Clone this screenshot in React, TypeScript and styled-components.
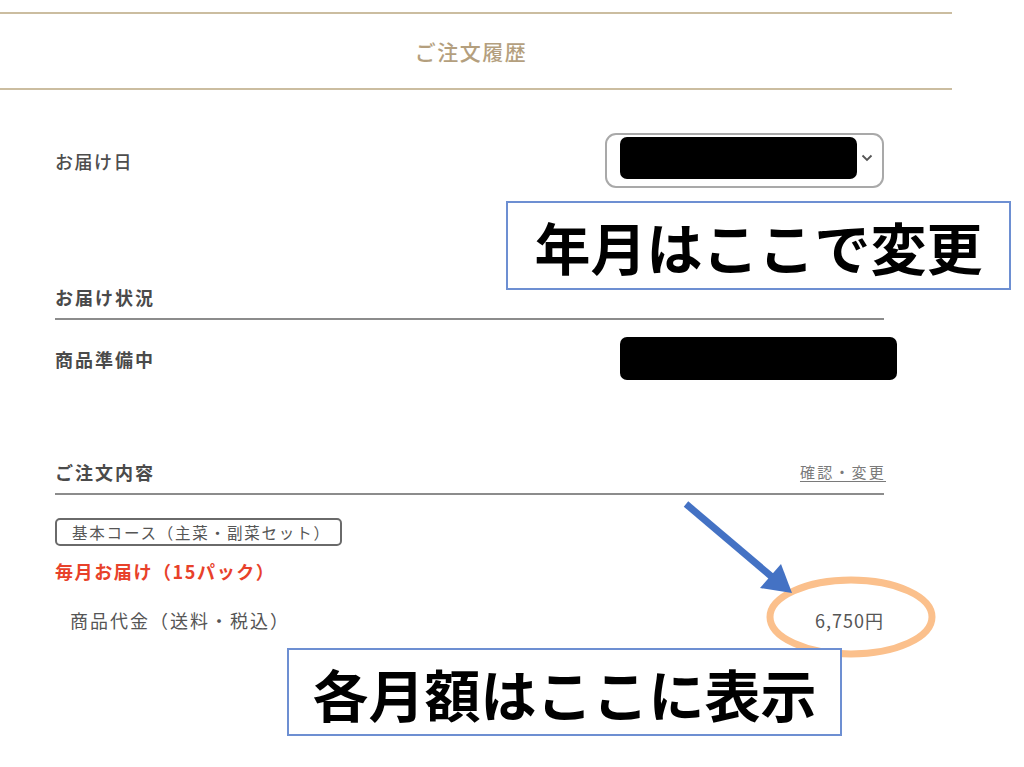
import styled, { createGlobalStyle } from "styled-components"

const GlobalStyle = createGlobalStyle`
    html, body {
        margin: 0;
        padding: 0;
        background: #ffffff;
    }
    body {
        font-family: "Noto Sans CJK JP", "Noto Sans", sans-serif;
        color: #4a4a4a;
    }
`

export default function App() {
    return (
        <>
            <GlobalStyle />
            <Page>
                <Header>
                    <Title>ご注文履歴</Title>
                </Header>

                <Content>
                    <DateRow>
                        <Label>お届け日</Label>
                        <Select>
                            <Redacted $w={237} $h={42} />
                            <Chevron viewBox="0 0 12 8">
                                <path d="M1.5 1.5 L6 6 L10.5 1.5" fill="none" stroke="#555" strokeWidth="1.8" />
                            </Chevron>
                        </Select>
                    </DateRow>

                    <SectionHead $top={96}>
                        <HeadText>お届け状況</HeadText>
                    </SectionHead>
                    <StatusRow>
                        <HeadText>商品準備中</HeadText>
                        <Redacted $w={277} $h={43} $overhang />
                    </StatusRow>

                    <SectionHead $top={79}>
                        <HeadText>ご注文内容</HeadText>
                        <EditLink>確認・変更</EditLink>
                    </SectionHead>

                    <CourseBadge>基本コース（主菜・副菜セット）</CourseBadge>
                    <Delivery>毎月お届け（15パック）</Delivery>
                    <PriceRow>
                        <span>商品代金（送料・税込）</span>
                        <Price>6,750円</Price>
                    </PriceRow>
                </Content>

                {/* annotations drawn over the screenshot */}
                <Marks viewBox="0 0 1024 767">
                    <ellipse cx="851" cy="617" rx="81" ry="37" fill="none" stroke="#fbc08c" strokeWidth="7" />
                    <line x1="686" y1="504" x2="772" y2="577" stroke="#4472c4" strokeWidth="7" />
                    <polygon points="792,593 760,588 781,564" fill="#4472c4" />
                </Marks>
                <Callout $left={506} $top={201} $w={505} $h={89}>年月はここで変更</Callout>
                <Callout $left={287} $top={648} $w={555} $h={88}>各月額はここに表示</Callout>
            </Page>
        </>
    )
}

const Page = styled.div`
    position: relative;
    width: 1024px;
    height: 767px;
    overflow: hidden;
    padding-top: 12px;
    box-sizing: border-box;
`

const Header = styled.header`
    width: 952px;
    height: 74px;
    border-top: 2px solid #cbbda0;
    border-bottom: 2px solid #cbbda0;
    display: flex;
    align-items: center;
    justify-content: center;
`

const Title = styled.h1`
    margin: 0 0 0 -10px;
    font-size: 21px;
    font-weight: 500;
    letter-spacing: 1.5px;
    color: #b49f7e;
`

const Content = styled.main`
    width: 829px;
    margin-left: 55px;
    display: flex;
    flex-direction: column;
`

const DateRow = styled.div`
    margin-top: 43px;
    display: flex;
    align-items: center;
    justify-content: space-between;
`

const Label = styled.span`
    font-size: 18px;
    font-weight: 500;
    letter-spacing: 1.5px;
    color: #4d4d4d;
`

const Select = styled.div`
    width: 279px;
    height: 55px;
    box-sizing: border-box;
    border: 2px solid #a9a9a9;
    border-radius: 11px;
    display: flex;
    align-items: center;
    padding: 0 0 6px 13px;
    gap: 4px;
`

const Redacted = styled.div<{ $w: number; $h: number; $overhang?: boolean }>`
    width: ${(p) => p.$w}px;
    height: ${(p) => p.$h}px;
    background: #000;
    border-radius: 7px;
    margin-right: ${(p) => (p.$overhang ? "-13px" : "0")};
`

const Chevron = styled.svg`
    width: 12px;
    height: 8px;
`

const SectionHead = styled.div<{ $top: number }>`
    margin-top: ${(p) => p.$top}px;
    padding-bottom: 8px;
    border-bottom: 2px solid #8c8c8c;
    display: flex;
    align-items: center;
    justify-content: space-between;
    line-height: 26px;
`

const HeadText = styled.span`
    font-size: 18px;
    font-weight: 700;
    letter-spacing: 2px;
    color: #4a4a4a;
`

const EditLink = styled.a`
    font-size: 15px;
    letter-spacing: 2.2px;
    margin-right: -2px;
    color: #7a7a7a;
    text-decoration: underline;
    text-underline-offset: 3px;
`

const StatusRow = styled.div`
    margin-top: 17px;
    display: flex;
    align-items: center;
    justify-content: space-between;
`

const CourseBadge = styled.div`
    margin-top: 23px;
    width: 287px;
    height: 28px;
    box-sizing: border-box;
    border: 2px solid #6a6a6a;
    border-radius: 5px;
    padding-left: 15px;
    display: flex;
    align-items: center;
    font-size: 15.5px;
    letter-spacing: 1.8px;
    color: #555;
    white-space: nowrap;
`

const Delivery = styled.div`
    margin-top: 12px;
    line-height: 26px;
    font-size: 18px;
    font-weight: 700;
    letter-spacing: 1.6px;
    color: #e8412a;
`

const PriceRow = styled.div`
    margin-top: 23px;
    padding-left: 15px;
    line-height: 26px;
    display: flex;
    justify-content: space-between;
    font-size: 18px;
    letter-spacing: 2px;
    color: #555;
`

const Price = styled.span`
    letter-spacing: 1px;
`

const Marks = styled.svg`
    position: absolute;
    inset: 0;
    width: 1024px;
    height: 767px;
    pointer-events: none;
`

const Callout = styled.div<{ $left: number; $top: number; $w: number; $h: number }>`
    position: absolute;
    left: ${(p) => p.$left}px;
    top: ${(p) => p.$top}px;
    width: ${(p) => p.$w}px;
    height: ${(p) => p.$h}px;
    box-sizing: border-box;
    border: 2px solid #6d8fd2;
    background: #fff;
    display: flex;
    align-items: center;
    justify-content: center;
    font-size: 56px;
    font-weight: 700;
    color: #000;
`
